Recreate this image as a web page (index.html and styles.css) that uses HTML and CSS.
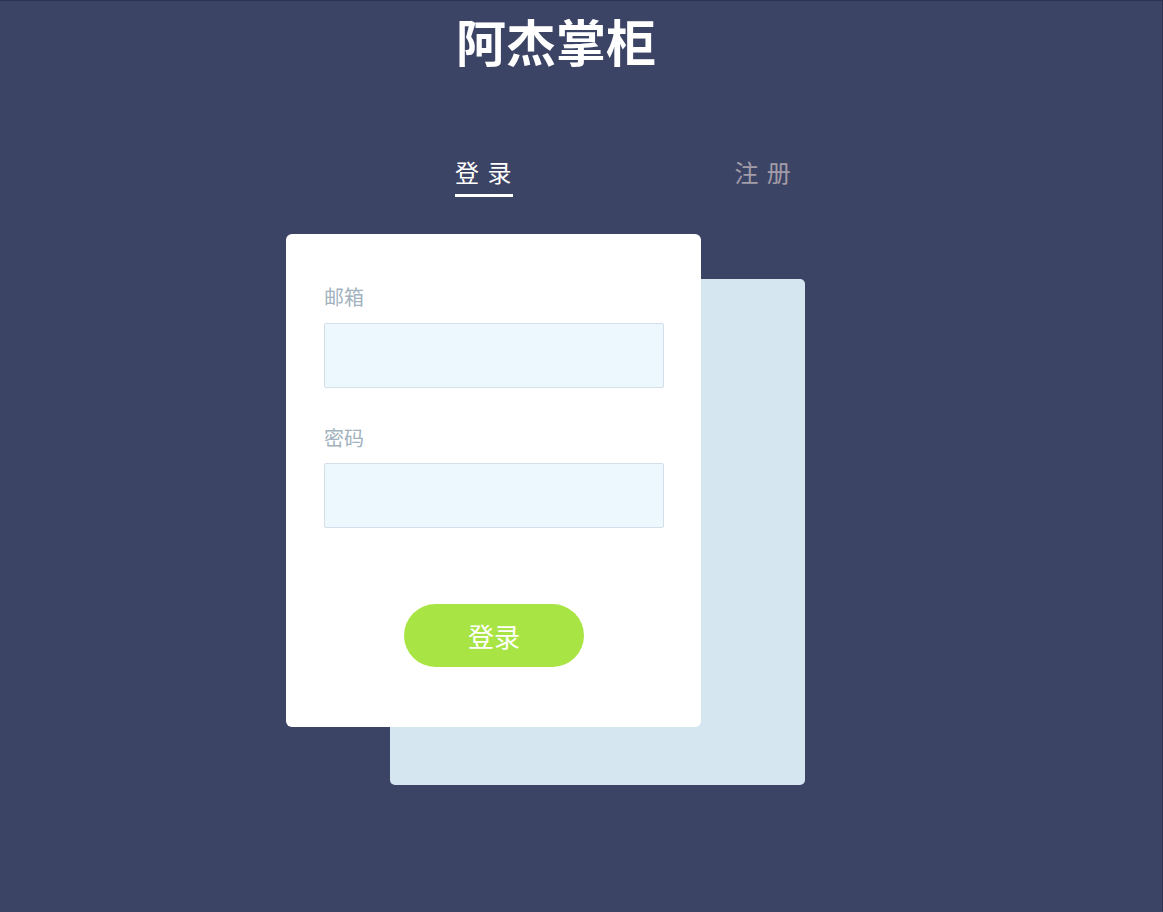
FILE: index.html
```html
<!DOCTYPE html>
<html lang="zh-CN">
<head>
<meta charset="utf-8">
<title>阿杰掌柜</title>
<link rel="stylesheet" href="styles.css">
</head>
<body>
<div class="page">
  <h1 class="title">阿杰掌柜</h1>
  <nav class="tabs">
    <a class="tab active">登 录</a>
    <a class="tab">注 册</a>
  </nav>
  <div class="stack">
    <div class="card-back"></div>
    <form class="card">
      <label class="label">邮箱</label>
      <input class="field" type="text">
      <label class="label label-second">密码</label>
      <input class="field" type="password">
      <button class="submit" type="button">登录</button>
    </form>
  </div>
</div>
</body>
</html>
```
FILE: styles.css
```css
html, body {
  margin: 0;
  padding: 0;
}
body {
  background: #3c4465;
  font-family: "Noto Sans CJK SC", "Noto Sans", sans-serif;
  border-top: 1px solid #2c3350;
  border-right: 1px solid #2c3350;
  min-height: 911px;
  box-sizing: border-box;
}
.page {
  margin-left: 286px;
  width: 540px;
  display: flex;
  flex-direction: column;
}
.title {
  margin: 0;
  padding-top: 4px;
  text-align: center;
  color: #ffffff;
  font-size: 50px;
  font-weight: 700;
  line-height: 70px;
}
.tabs {
  display: flex;
  margin-top: 81px;
  padding-left: 169px;
  gap: 223px;
}
.tab {
  color: #a39ca9;
  font-size: 24px;
  line-height: 32px;
  letter-spacing: 1.5px;
  margin-right: -1.5px;
  padding-bottom: 6px;
  border-bottom: 3px solid transparent;
}
.tab.active {
  color: #ffffff;
  border-bottom-color: #ffffff;
}
.stack {
  position: relative;
  margin-top: 37px;
  width: 415px;
}
.card-back {
  position: absolute;
  left: 104px;
  top: 45px;
  width: 415px;
  height: 506px;
  background: #d6e6f0;
  border-radius: 5px;
}
.card {
  position: relative;
  box-sizing: border-box;
  width: 415px;
  height: 493px;
  background: #ffffff;
  border-radius: 6px;
  padding: 48px 37px 0 38px;
  display: flex;
  flex-direction: column;
}
.label {
  color: #a2b2be;
  font-size: 20px;
  line-height: 30px;
  margin-bottom: 11px;
}
.label-second {
  margin-top: 35px;
  margin-bottom: 10px;
}
.field {
  box-sizing: border-box;
  width: 340px;
  height: 65px;
  margin: 0;
  background: #edf8fe;
  border: 1px solid #d3dfeb;
  border-radius: 2px;
  outline: none;
}
.submit {
  align-self: flex-start;
  margin: 76px 0 0 80px;
  width: 180px;
  height: 63px;
  border: none;
  border-radius: 32px;
  background: #a9e445;
  color: #ffffff;
  font-family: "Noto Sans CJK SC", "Noto Sans", sans-serif;
  font-size: 26px;
  line-height: 32px;
  padding: 0;
}
```
